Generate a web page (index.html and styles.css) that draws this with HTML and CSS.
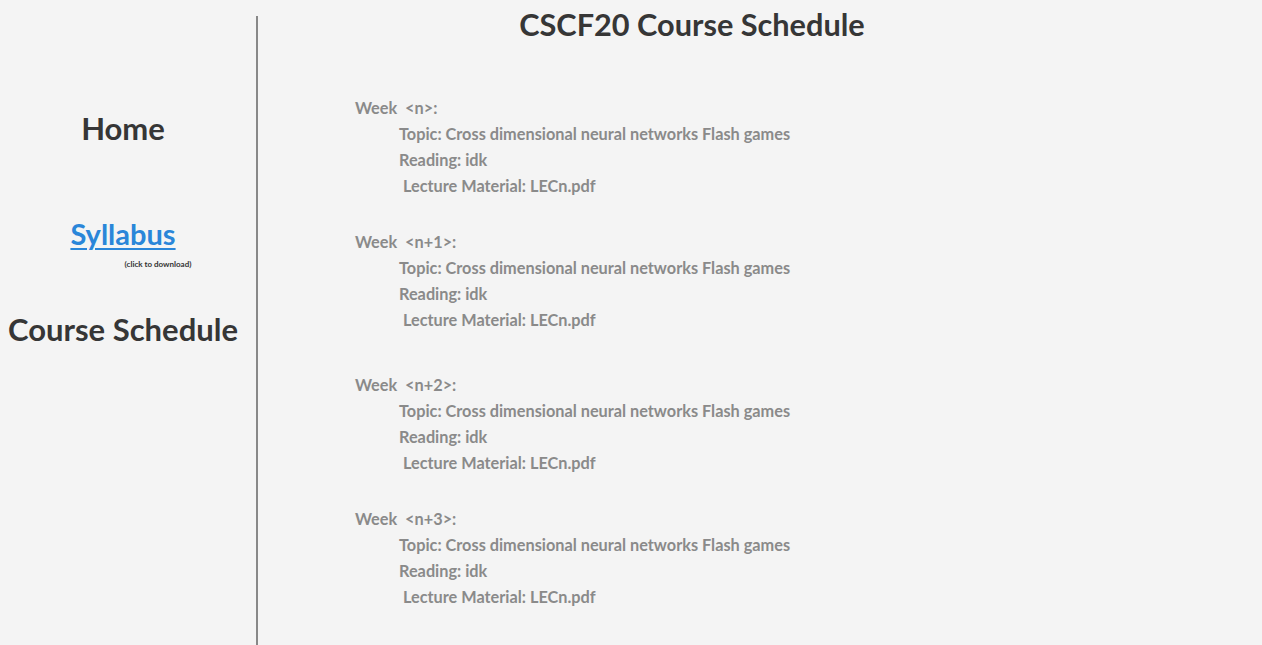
FILE: index.html
```html
<!DOCTYPE html>
<html>
<head>
<meta charset="utf-8">
<link rel="stylesheet" href="styles.css">
</head>
<body>
<div class="page">
  <nav class="sidebar">
    <h2 class="nav-item home">Home</h2>
    <div class="syllabus">
      <a class="nav-link" href="#">Syllabus</a>
      <span class="hint">(click to download)</span>
    </div>
    <h2 class="nav-item schedule">Course Schedule</h2>
  </nav>
  <main class="main">
    <h1 class="title">CSCF20 Course Schedule</h1>
    <div class="weeks">
      <section class="week">
        <div class="week-head">Week&nbsp;&nbsp;&lt;n&gt;:</div>
        <div class="item">Topic: Cross dimensional neural networks Flash games</div>
        <div class="item">Reading: idk</div>
        <div class="item">&nbsp;Lecture Material: LECn.pdf</div>
      </section>
      <section class="week">
        <div class="week-head">Week&nbsp;&nbsp;&lt;n+1&gt;:</div>
        <div class="item">Topic: Cross dimensional neural networks Flash games</div>
        <div class="item">Reading: idk</div>
        <div class="item">&nbsp;Lecture Material: LECn.pdf</div>
      </section>
      <section class="week wide">
        <div class="week-head">Week&nbsp;&nbsp;&lt;n+2&gt;:</div>
        <div class="item">Topic: Cross dimensional neural networks Flash games</div>
        <div class="item">Reading: idk</div>
        <div class="item">&nbsp;Lecture Material: LECn.pdf</div>
      </section>
      <section class="week">
        <div class="week-head">Week&nbsp;&nbsp;&lt;n+3&gt;:</div>
        <div class="item">Topic: Cross dimensional neural networks Flash games</div>
        <div class="item">Reading: idk</div>
        <div class="item">&nbsp;Lecture Material: LECn.pdf</div>
      </section>
    </div>
  </main>
</div>
</body>
</html>
```
FILE: styles.css
```css
html, body {
  margin: 0;
  padding: 0;
  background: #f4f4f4;
  font-family: Lato, "Open Sans", sans-serif;
  height: 100%;
  overflow: hidden;
}
.page {
  display: flex;
  height: 645px;
}
.sidebar {
  width: 246px;
  flex: none;
  margin-top: 16px;
  border-right: 2px solid #888;
  display: flex;
  flex-direction: column;
  align-items: center;
  padding-right: 10px;
}
.nav-item {
  margin: 0;
  font-size: 31px;
  font-weight: 700;
  color: #363636;
  line-height: 40px;
}
.home {
  margin-top: 92px;
}
.syllabus {
  margin-top: 69px;
  display: flex;
  flex-direction: column;
  align-items: center;
}
.nav-link {
  font-size: 29px;
  font-weight: 700;
  color: #2a86d9;
  text-decoration: underline;
  text-decoration-thickness: 2px;
  text-underline-offset: 3px;
  line-height: 34px;
}
.hint {
  font-size: 8px;
  font-weight: 700;
  color: #333;
  margin-left: 70px;
  margin-top: 8px;
}
.schedule {
  margin-top: 40px;
}
.main {
  flex: 1;
}
.title {
  margin: 0;
  padding-top: 5px;
  padding-right: 136px;
  text-align: center;
  font-size: 30.7px;
  font-weight: 700;
  color: #363636;
  line-height: 40px;
}
.weeks {
  padding-left: 97px;
  padding-top: 50px;
  display: flex;
  flex-direction: column;
  gap: 30px;
}
.week.wide {
  margin-top: 9px;
}
.week-head, .item {
  font-size: 16.3px;
  font-weight: 700;
  color: #8a8a8a;
  line-height: 26px;
}
.item {
  padding-left: 44px;
}
```
